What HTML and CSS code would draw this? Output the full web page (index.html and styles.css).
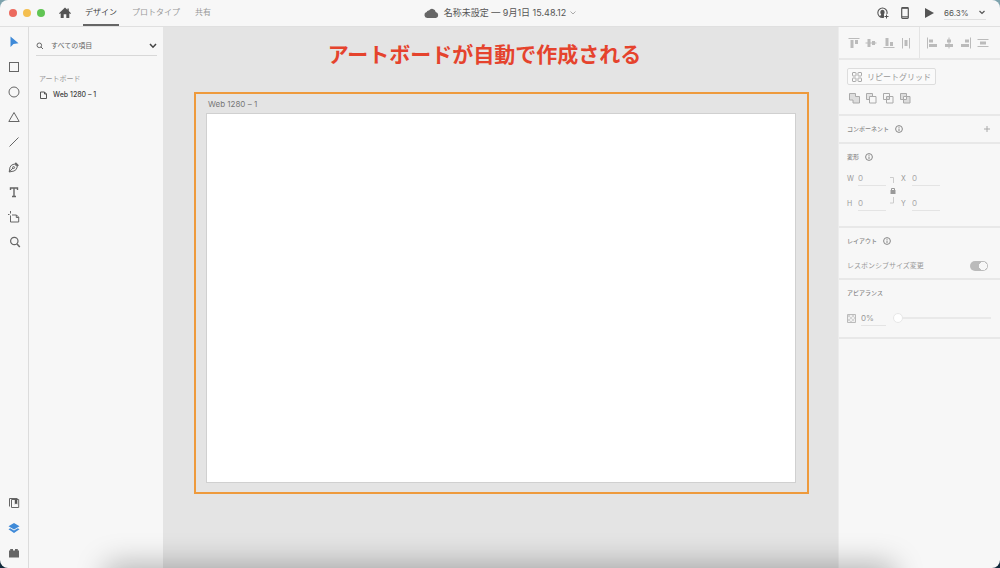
FILE: index.html
```html
<!DOCTYPE html>
<html lang="ja">
<head>
<meta charset="utf-8">
<meta name="viewport" content="width=device-width, initial-scale=1">
<title>名称未設定</title>
<link rel="stylesheet" href="styles.css">
</head>
<body>
<div class="app">
  <header class="topbar">
    <div class="topbar-left">
      <div class="lights"><button class="light red" aria-label="閉じる"></button><button class="light yellow" aria-label="最小化"></button><button class="light green" aria-label="最大化"></button></div>
      <button class="icon-btn home" aria-label="ホーム"><svg width="12" height="12" viewBox="0 0 12 12"><path fill="#555" d="M6 .5 0 6.2l.8.7.9-.6V11h3V7.3h2.6V11h3V6.3l.9.6.8-.7L9.8 4V1.5H8.4v1.2z"/></svg></button>
      <nav class="tabs"><button class="tab active">デザイン</button><button class="tab">プロトタイプ</button><button class="tab">共有</button></nav>
    </div>
    <button class="doc"><svg width="15" height="10" viewBox="0 0 15 10"><path fill="#666" d="M3.2 10a3 3 0 0 1-.5-5.9A2 2 0 0 1 5 2.5 3.7 3.7 0 0 1 11.7 4 3.1 3.1 0 0 1 12 10z"/></svg><span>名称未設定 — 9月1日 15.48.12</span><svg class="doc-chevron" width="6" height="4" viewBox="0 0 6 4"><path d="M.5.5 3 3 5.5.5" fill="none" stroke="#aaa"/></svg></button>
    <div class="topbar-right">
      <button class="icon-btn" aria-label="招待"><svg width="12" height="12" viewBox="0 0 12 12"><path fill="#555" fill-rule="evenodd" d="M5.5.5a5.200 5.200 0 1 0 0 10.400 5.200 5.200 0 1 0 0-10.400zM3.200 9.200C.9 7.800.9 4 3 2.500c1.300-1.200 3.700-1.200 5 0C10.100 4 10.100 7.800 7.800 9.200 7.800 8.500 7 8.300 6.800 7.600 8.400 5.600 7.600 2.700 5.500 2.700S2.600 5.600 4.200 7.600c-.2.7-1 .9-1 1.600z"/><path stroke="#f7f7f7" stroke-width="3" d="M9.500 7v5M7 9.500h5"/><path stroke="#555" d="M9.500 7.500v4M7.500 9.500h4"/></svg></button>
      <button class="icon-btn" aria-label="デバイスプレビュー"><svg width="8" height="12" viewBox="0 0 8 12"><rect x=".7" y=".7" width="6.600" height="10.600" rx=".8" fill="none" stroke="#555" stroke-width="1.200"/><path stroke="#555" d="M1 9.800h6M1 1.300h6"/></svg></button>
      <button class="icon-btn play" aria-label="再生"><svg width="9" height="10" viewBox="0 0 9 10"><path fill="#555" d="M0 0v10l9-5z"/></svg></button>
      <div class="zoom"><select aria-label="ズーム"><option>66.3%</option></select><svg width="8" height="6" viewBox="0 0 8 6"><path d="M1.500 1 4 3.500 6.500 1" fill="none" stroke="#555" stroke-width="1.200"/></svg></div>
    </div>
  </header>
  <main class="workspace">
    <aside class="tools">
      <button class="tool" aria-label="選択"><svg width="14" height="14" viewBox="0 0 14 14"><path fill="#3f8ad8" d="M3.500 1.500v10.500l3-3 5-.7z"/></svg></button>
      <button class="tool" aria-label="長方形"><svg width="14" height="14" viewBox="0 0 14 14"><rect x="2.500" y="2.500" width="9" height="9"/></svg></button>
      <button class="tool" aria-label="楕円形"><svg width="14" height="14" viewBox="0 0 14 14"><circle cx="7" cy="7" r="5"/></svg></button>
      <button class="tool" aria-label="多角形"><svg width="14" height="14" viewBox="0 0 14 14"><path d="M7 2.500 1.800 11.500h10.400z"/></svg></button>
      <button class="tool" aria-label="線"><svg width="14" height="14" viewBox="0 0 14 14"><path d="m2.500 11.500 9-9"/></svg></button>
      <button class="tool" aria-label="ペン"><svg width="14" height="14" viewBox="0 0 14 14"><path d="M2.200 12 3 7.200Q4 4.500 7.500 4l2.800 2.800Q9.500 10.300 7 11zM2.200 12l4-4.200"/><circle cx="6.600" cy="7.500" r="1"/><path stroke-width="2" d="m8.200 3 3 3"/></svg></button>
      <button class="tool" aria-label="テキスト"><svg width="14" height="14" viewBox="0 0 14 14"><path d="M3.500 5V3h7v2M7 3v8.500M5 11.500h4" stroke-width="1.400"/></svg></button>
      <button class="tool" aria-label="アートボード"><svg width="14" height="14" viewBox="0 0 14 14"><path d="M3.500 5.500V12h8.200V7.200L9.500 5H5M9.300 5v2.500h2.400M3.500 1v2.500M1 4.500h1.500"/></svg></button>
      <button class="tool" aria-label="ズーム"><svg width="14" height="14" viewBox="0 0 14 14"><circle cx="7.300" cy="6" r="3.700" stroke-width="1.200"/><path d="m10 8.900 2.800 3" stroke-width="1.500"/></svg></button>
      <span class="spacer"></span>
      <button class="tool" aria-label="ライブラリ"><svg width="14" height="14" viewBox="0 0 14 14"><path d="M10.500 2.500h-8v8M4.500 3.500h7.200v8H4.500z"/><path d="M7.800 3.500h2.500v5L9 7.500 7.800 8.500z" fill="#555"/></svg></button>
      <button class="tool" aria-label="レイヤー"><svg width="14" height="14" viewBox="0 0 14 14"><path d="m7 2 5.500 3.200L7 8.500 1.500 5.200zM1.500 8.300l1.700-1L7 9.600l3.800-2.300 1.700 1L7 12z" fill="#3f8ad8"/></svg></button>
      <button class="tool" aria-label="プラグイン"><svg width="14" height="14" viewBox="0 0 14 14"><path d="M2 4.500h1.200v-1.500H6v1.500h2V3h2.800v1.500H12v7H2z" fill="#666"/></svg></button>
    </aside>
    <aside class="layers">
      <div class="search"><svg width="8" height="8" viewBox="0 0 8 8"><circle cx="3.300" cy="3.300" r="2.300" fill="none" stroke="#666"/><path d="m5 5 2 2" stroke="#666"/></svg><input type="text" placeholder="すべての項目" aria-label="項目を検索"><button class="icon-btn" aria-label="絞り込み"><svg width="8" height="6" viewBox="0 0 8 6"><path d="m1 1 3 3.200L7 1" fill="none" stroke="#444" stroke-width="1.500"/></svg></button></div>
      <h2 class="list-title">アートボード</h2>
      <button class="layer"><svg width="7" height="8" viewBox="0 0 7 8"><path d="M.5 1h4l2 2v4.500h-6zM4.500 1v2h2" fill="none" stroke="#555"/></svg><span>Web 1280 – 1</span></button>
    </aside>
    <section class="canvas">
      <h1 class="caption">アートボードが自動で作成される</h1>
      <div class="frame"><div class="artboard-name">Web 1280 – 1</div><div class="artboard"></div></div>
    </section>
    <aside class="inspector">
      <div class="align">
        <div class="align-group">
          <button class="icon-btn" aria-label="上揃え"><svg width="12" height="12" viewBox="0 0 12 12"><path d="M.5 1.500h11" stroke="#bbb"/><path fill="#bbb" d="M2.500 3h3v8h-3zM7 3h3v4H7z"/></svg></button>
          <button class="icon-btn" aria-label="中央揃え（垂直方向）"><svg width="12" height="12" viewBox="0 0 12 12"><path d="M.5 6h11" stroke="#bbb"/><path fill="#bbb" d="M2.500 2h3v8h-3zM7 4h3v4H7z"/></svg></button>
          <button class="icon-btn" aria-label="下揃え"><svg width="12" height="12" viewBox="0 0 12 12"><path d="M.5 10.500h11" stroke="#bbb"/><path fill="#bbb" d="M2.500 1h3v8h-3zM7 5h3v4H7z"/></svg></button>
          <button class="icon-btn" aria-label="水平方向に分布"><svg width="12" height="12" viewBox="0 0 12 12"><path d="M2.500 1v10.500M9.500 1v10.500" stroke="#bbb"/><path fill="#bbb" d="M4.500 3h3v6h-3z"/></svg></button>
        </div>
        <div class="align-group">
          <button class="icon-btn" aria-label="左揃え"><svg width="12" height="12" viewBox="0 0 12 12"><path d="M1.500.5v11" stroke="#bbb"/><path fill="#bbb" d="M3 2.500h4v3H3zM3 7h8v3H3z"/></svg></button>
          <button class="icon-btn" aria-label="中央揃え（水平方向）"><svg width="12" height="12" viewBox="0 0 12 12"><path d="M6 .5v11" stroke="#bbb"/><path fill="#bbb" d="M4 2.500h4v3H4zM2 7h8v3H2z"/></svg></button>
          <button class="icon-btn" aria-label="右揃え"><svg width="12" height="12" viewBox="0 0 12 12"><path d="M10.500.5v11" stroke="#bbb"/><path fill="#bbb" d="M5 2.500h4v3H5zM1 7h8v3H1z"/></svg></button>
          <button class="icon-btn" aria-label="垂直方向に分布"><svg width="12" height="12" viewBox="0 0 12 12"><path d="M.5 2.500h11M.5 9.500h11" stroke="#bbb"/><path fill="#bbb" d="M3 4.500h6v3H3z"/></svg></button>
        </div>
      </div>
      <div class="section repeat">
        <button class="repeat-btn"><svg width="10" height="10" viewBox="0 0 10 10" fill="none" stroke="#aaa"><rect x=".5" y=".5" width="3.500" height="3.500" rx=".5"/><rect x="6" y=".5" width="3.500" height="3.500" rx=".5"/><rect x=".5" y="6" width="3.500" height="3.500" rx=".5"/><rect x="6" y="6" width="3.500" height="3.500" rx=".5"/></svg><span>リピートグリッド</span></button>
        <div class="boolean">
          <button class="icon-btn" aria-label="合体"><svg width="11" height="11" viewBox="0 0 11 11"><path d="M.5.5h6v3h4v6.500h-6.500V7H.5z" fill="#ddd" stroke="#aaa"/></svg></button>
          <button class="icon-btn" aria-label="前面オブジェクトで型抜き"><svg width="11" height="11" viewBox="0 0 11 11"><path d="M3.500 6.500h-3v-6h6v3" fill="#e4e4e4" stroke="#aaa"/><path d="M3.500 3.500h6.500V10H3.500z" fill="#f7f7f7" stroke="#aaa"/></svg></button>
          <button class="icon-btn" aria-label="交差"><svg width="11" height="11" viewBox="0 0 11 11"><path d="M.5.5h6v6h-6zM3.500 3.500H10V10H3.500z" fill="none" stroke="#aaa"/><path fill="#ddd" d="M4 4h2v2H4z"/></svg></button>
          <button class="icon-btn" aria-label="中マド"><svg width="11" height="11" viewBox="0 0 11 11"><path d="M.5.5h6v6h-6zM3.500 3.500H10V10H3.500z" fill="#ddd" fill-rule="evenodd" stroke="#aaa"/></svg></button>
        </div>
      </div>
      <div class="section component"><h2>コンポーネント</h2><svg class="info" width="8" height="8" viewBox="0 0 8 8"><circle cx="4" cy="4" r="3.400"/><path d="M4 3.500V6M4 1.800v1"/></svg><button class="icon-btn push" aria-label="コンポーネントを追加"><svg width="8" height="8" viewBox="0 0 8 8"><path d="M4 1v6M1 4h6" stroke="#aaa"/></svg></button></div>
      <div class="section transform">
        <div class="heading"><h2>変形</h2><svg class="info" width="8" height="8" viewBox="0 0 8 8"><circle cx="4" cy="4" r="3.400"/><path d="M4 3.500V6M4 1.800v1"/></svg></div>
        <div class="fields">
          <label class="field"><span>W</span><input type="text" value="0"></label>
          <button class="icon-btn lock" aria-label="縦横比を固定"><svg width="7" height="30" viewBox="0 2 7 30"><path d="M0 3.500h3.500V9M3.500 23v6H0" fill="none" stroke="#ccc"/><path d="M1.500 17v-2.500h3V16" fill="none" stroke="#999"/><path d="M.5 16h5v4h-5z" fill="#999"/></svg></button>
          <label class="field"><span>X</span><input type="text" value="0"></label>
          <label class="field"><span>H</span><input type="text" value="0"></label>
          <label class="field"><span>Y</span><input type="text" value="0"></label>
        </div>
      </div>
      <div class="section layout">
        <div class="heading"><h2>レイアウト</h2><svg class="info" width="8" height="8" viewBox="0 0 8 8"><circle cx="4" cy="4" r="3.400"/><path d="M4 3.500V6M4 1.800v1"/></svg></div>
        <label class="responsive"><span>レスポンシブサイズ変更</span><input type="checkbox" checked></label>
      </div>
      <div class="section appearance">
        <div class="heading"><h2>アピアランス</h2></div>
        <div class="opacity"><svg width="9" height="9" viewBox="0 0 9 9"><path d="M.5.500h8v8h-8z" fill="#f0f0f0" stroke="#bbb"/><path fill="#d4d4d4" d="M1 1h2v2H1zM5 1h2v2H5zM3 3h2v2H3zM7 3h1v2H7zM1 5h2v2H1zM5 5h2v2H5zM3 7h2v1H3z"/></svg><input class="percent" type="text" value="0%" aria-label="不透明度"><input class="slider" type="range" min="0" max="100" value="0" aria-label="不透明度スライダー"></div>
      </div>
    </aside>
  </main>
  <div class="dock-shadow"></div>
</div>
</body>
</html>
```
FILE: styles.css
```css
* { box-sizing: border-box; }
body {
  margin: 0;
  background: linear-gradient(#7da3ad 0 50%, #122a3c 50%);
  color: #555;
  font-family: Inter, "Noto Sans CJK JP", sans-serif;
  font-size: 8px;
  line-height: 12px;
}
button, input, select {
  margin: 0;
  padding: 0;
  border: 0;
  background: none;
  color: inherit;
  font: inherit;
  outline: 0;
}
h1, h2 { margin: 0; font-weight: 400; }
svg { display: block; flex: none; }
.app {
  position: relative;
  display: flex;
  flex-direction: column;
  min-height: 100vh;
  overflow: hidden;
  border-radius: 8px;
  background: #f7f7f7;
}
.icon-btn { display: flex; align-items: center; justify-content: center; }

.topbar {
  display: grid;
  grid-template-columns: 1fr auto 1fr;
  height: 27px;
  border-bottom: 1px solid #e0e0e0;
}
.topbar-left, .topbar-right, .doc { display: flex; align-items: center; }
.topbar-left { padding-left: 9px; }
.lights { display: flex; gap: 6px; }
.light { width: 8px; height: 8px; border-radius: 50%; }
.red { background: #ec6a5e; }
.yellow { background: #f4bf50; }
.green { background: #61c554; }
.home { margin: 0 12px 0 14px; }
.tabs { display: flex; align-self: stretch; gap: 11px; }
.tab { padding: 0 2px; border-bottom: 2px solid transparent; color: #999; }
.tab.active { border-color: #666; color: #444; }
.doc { gap: 5px; font-size: 9px; color: #555; }
.doc-chevron { margin-left: -1px; }
.topbar-right { justify-content: flex-end; gap: 12px; padding-right: 14px; }
.play { margin-left: 4px; }
.zoom {
  display: flex;
  align-items: center;
  justify-content: space-between;
  width: 42px;
  height: 13px;
  margin-left: -2px;
  border-bottom: 1px solid #e0e0e0;
}
.zoom select { appearance: none; width: 30px; }

.workspace {
  display: grid;
  grid-template-columns: 29px 134px 1fr 162px;
  flex: 1;
}
.tools {
  display: flex;
  flex-direction: column;
  padding: 2px 0 3px;
  border-right: 1px solid #dcdcdc;
}
.tool { display: flex; align-items: center; justify-content: center; height: 25px; }
.tool svg { fill: none; stroke: #666; stroke-width: 1; }
.tool path[fill] { stroke: none; }
.spacer { flex: 1; }
.layers { padding: 9px 6px 0 7px; }
.search {
  display: flex;
  align-items: center;
  gap: 7px;
  height: 20px;
  border-bottom: 1px solid #d8d8d8;
  font-size: 7px;
}
.search input { flex: 1; min-width: 0; }
.search input::placeholder { color: #666; opacity: 1; }
.list-title { margin: 17px 0 4px 3px; color: #999; font-size: 7px; }
.layer { display: flex; align-items: center; gap: 6px; padding-left: 4px; color: #444; font-size: 7px; font-weight: 500; }

.canvas {
  display: flex;
  flex-direction: column;
  padding: 13px 29px 74px 31px;
  background: #e4e4e4;
}
.caption {
  margin-bottom: 22px;
  padding-right: 34px;
  color: #e5432d;
  font-size: 21px;
  font-weight: 700;
  line-height: 30px;
  text-align: center;
}
.frame {
  display: flex;
  flex: 1;
  flex-direction: column;
  padding: 4px 11px 9px 10px;
  border: 2px solid #ee9a3c;
}
.artboard-name { margin-bottom: 3px; padding-left: 2px; color: #777; }
.artboard { flex: 1; border: 1px solid #d0d0d0; background: #fff; }

.inspector { border-left: 1px solid #ececec; color: #999; }
.align { display: grid; grid-template-columns: 80px 1fr; height: 33px; border-bottom: 2px solid #e8e8e8; }
.align-group { display: flex; align-items: center; justify-content: space-between; padding: 0 7px 0 9px; }
.align-group + .align-group { padding: 0 11px 0 6px; border-left: 1px solid #e4e4e4; }
.section { padding: 0 9px 0 8px; border-bottom: 2px solid #e8e8e8; }
.section h2 { font-size: 6px; font-weight: 500; color: #888; }
.heading { display: flex; align-items: center; gap: 6px; }
.info { fill: none; stroke: #888; }
.push { margin-left: auto; }
.repeat { padding-top: 8px; padding-bottom: 10px; }
.repeat-btn {
  display: flex;
  align-items: center;
  gap: 5px;
  height: 17px;
  padding: 0 4px 0 4px;
  border: 1px solid #ddd;
  border-radius: 2px;
  background: #fafafa;
}
.boolean { display: flex; gap: 6px; margin-top: 8px; padding-left: 2px; }
.component { display: flex; align-items: center; gap: 6px; height: 28px; }
.transform { padding-top: 7px; padding-bottom: 15px; }
.fields {
  display: grid;
  grid-template-columns: 39px 7px 39px;
  gap: 10px 4px;
  margin-top: 8px;
}
.field { display: flex; align-items: center; gap: 3px; font-size: 7px; }
.field span { width: 8px; flex: none; }
.field input { width: 100%; min-width: 0; height: 15px; border-bottom: 1px solid #e4e4e4; color: #aaa; font-size: 8px; }
.lock { grid-column: 2; grid-row: 1 / 3; }
.layout { padding-top: 7px; padding-bottom: 6px; }
.responsive { display: flex; align-items: center; justify-content: space-between; margin-top: 13px; font-size: 7px; }
.responsive input {
  appearance: none;
  width: 18px;
  height: 10px;
  margin-right: 3px;
  border-radius: 5px;
  background: radial-gradient(circle at 13px 5px, #f7f7f7 0 4px, #bbb 4px);
}
.appearance { padding-top: 7px; padding-bottom: 11px; }
.opacity { display: flex; align-items: center; margin-top: 11px; }
.percent { width: 25px; height: 16px; margin: 0 7px 0 5px; border-bottom: 1px solid #e4e4e4; }
.slider {
  appearance: none;
  flex: 1;
  min-width: 0;
  height: 10px;
  background: linear-gradient(#e9e9e9, #e9e9e9) center / 100% 2px no-repeat;
}
.slider::-webkit-slider-thumb {
  appearance: none;
  width: 10px;
  height: 10px;
  border: 1px solid #e8e8e8;
  border-radius: 50%;
  background: #fff;
}
.dock-shadow {
  position: absolute;
  top: 100%;
  right: 11%;
  left: 11%;
  height: 40px;
  box-shadow: 0 0 30px 4px rgba(0, 0, 0, .28);
  pointer-events: none;
}
```
